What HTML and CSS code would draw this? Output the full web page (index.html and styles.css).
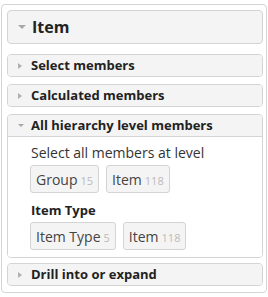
FILE: index.html
```html
<!DOCTYPE html>
<html lang="en">
<head>
    <meta charset="UTF-8">
    <title>Item</title>
    <link rel="stylesheet" href="styles.css">
</head>
<body>
    <div class="panel">
        <div class="title-box">
            <span class="caret-down"></span>
            <span class="title">Item</span>
        </div>

        <div class="section">
            <div class="section-header">
                <span class="caret-right"></span>
                <span>Select members</span>
            </div>
        </div>

        <div class="section">
            <div class="section-header">
                <span class="caret-right"></span>
                <span>Calculated members</span>
            </div>
        </div>

        <div class="section open">
            <div class="section-header">
                <span class="caret-down small"></span>
                <span>All hierarchy level members</span>
            </div>
            <div class="section-body">
                <p class="hint">Select all members at level</p>
                <div class="chips">
                    <span class="chip">Group <span class="count">15</span></span>
                    <span class="chip">Item <span class="count">118</span></span>
                </div>
                <p class="group-label">Item Type</p>
                <div class="chips">
                    <span class="chip">Item Type <span class="count">5</span></span>
                    <span class="chip">Item <span class="count">118</span></span>
                </div>
            </div>
        </div>

        <div class="section last">
            <div class="section-header">
                <span class="caret-right"></span>
                <span>Drill into or expand</span>
            </div>
        </div>
    </div>
</body>
</html>
```

FILE: styles.css
```css
body {
    margin: 0;
    font-family: "Open Sans", sans-serif;
    color: #333;
    background: #fff;
}

.panel {
    width: 256px;
    margin: 4px 0 0 1px;
    padding: 5px 3px 6px 5px;
    border: 1px solid #d4d4d4;
    border-radius: 4px;
}

.title-box {
    display: flex;
    align-items: center;
    height: 32px;
    margin-bottom: 10px;
    padding-left: 10px;
    background: #f4f4f4;
    border: 1px solid #d4d4d4;
    border-radius: 4px;
}

.title {
    font-size: 16px;
    line-height: 20px;
    font-weight: bold;
    color: #222;
}

.section {
    margin-bottom: 7px;
    border: 1px solid #d4d4d4;
    border-radius: 4px;
    overflow: hidden;
}

.section.open {
    margin-bottom: 5px;
}

.section.last {
    margin-bottom: 0;
}

.section-header {
    display: flex;
    align-items: center;
    height: 19px;
    padding: 0 0 2px 10px;
    background: #f4f4f4;
    font-size: 13px;
    line-height: 16px;
    font-weight: bold;
    color: #222;
}

.section.open .section-header {
    border-bottom: 1px solid #d4d4d4;
}

.caret-right {
    width: 0;
    height: 0;
    margin: 2px 9px 0 0;
    border-top: 3px solid transparent;
    border-bottom: 3px solid transparent;
    border-left: 4px solid #b0b0b0;
}

.caret-down {
    width: 0;
    height: 0;
    margin-right: 6px;
    border-left: 4px solid transparent;
    border-right: 4px solid transparent;
    border-top: 4px solid #a8a8a8;
}

.caret-down.small {
    margin: 2px 7px 0 0;
    border-left-width: 3px;
    border-right-width: 3px;
    border-top-width: 3px;
}

.section-body {
    padding: 6px 10px 7px 22px;
    background: #fff;
}

.hint {
    margin: 0 0 3px 1px;
    font-size: 14px;
    line-height: 19px;
    color: #333;
}

.group-label {
    margin: 8px 0 3px 1px;
    font-size: 13px;
    line-height: 18px;
    font-weight: bold;
    color: #222;
}

.chips {
    display: flex;
    gap: 7px;
}

.chip {
    display: inline-flex;
    align-items: baseline;
    gap: 3px;
    box-sizing: border-box;
    height: 28px;
    padding: 4px 5px 0 5px;
    background: #f4f4f4;
    border: 1px solid #d4d4d4;
    border-radius: 3px;
    font-size: 14px;
    line-height: 19px;
    color: #444;
}

.count {
    font-size: 11px;
    line-height: 1;
    color: #bbb;
}
```
